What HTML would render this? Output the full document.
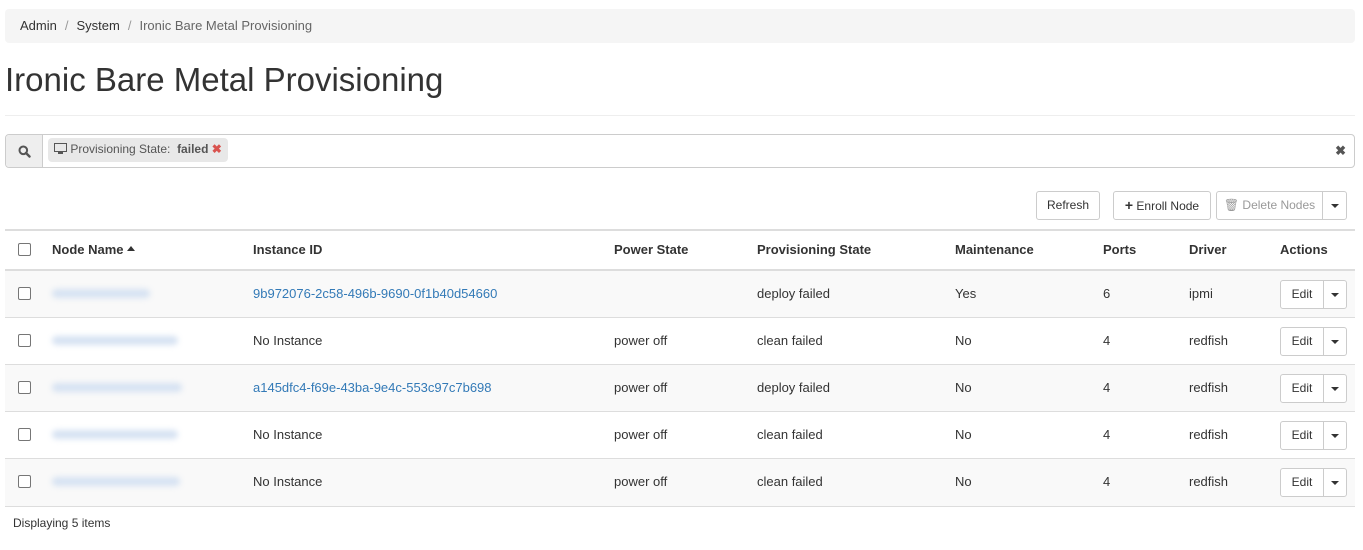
<!DOCTYPE html>
<html><head><style>
*{box-sizing:border-box;margin:0;padding:0}
body{width:1363px;height:550px;background:#fff;font-family:"Liberation Sans",Arial,sans-serif;font-size:13px;color:#333;position:relative;overflow:hidden}
.a{position:absolute}
.bc{left:5px;top:9px;width:1350px;height:34px;background:#f5f5f5;border-radius:4px;padding:9px 15px;font-size:13px}
.bc .s{color:#999;padding:0 8px}
.bc .c{color:#666}
h1{position:absolute;left:5px;top:61px;font-size:33px;font-weight:400;color:#333}
.hr{left:5px;top:115px;width:1350px;height:1px;background:#eee}
.srch{left:5px;top:134px;width:1350px;height:34px;border:1px solid #ccc;border-radius:4px;background:#fff}
.addon{left:0;top:0;width:37px;height:32px;background:#eee;border-right:1px solid #ccc;border-radius:4px 0 0 4px}
.pill{left:42px;top:3px;height:24px;background:#e8e8e8;border-radius:4px;padding:4px 6px 0 6px;font-size:12px;color:#555;white-space:nowrap}
.btn{height:29px;border:1px solid #ccc;border-radius:3px;background:#fff;font-size:12px;color:#333;text-align:center;line-height:27px}
.th{top:230px;font-weight:bold;font-size:13px;color:#333}
.cell{font-size:13px;color:#333}
a{color:#337ab7;text-decoration:none}
.cb{width:13px;height:13px;border:1px solid #767676;border-radius:2px;background:#fff}
.blur{height:9px;background:#d6e2f2;filter:blur(3px);border-radius:5px}
.car{display:inline-block;width:0;height:0;border-left:4px solid transparent;border-right:4px solid transparent;border-top:4px solid #333;vertical-align:middle}
</style></head><body>
<div class="a bc">Admin<span class="s">/</span>System<span class="s">/</span><span class="c">Ironic Bare Metal Provisioning</span></div>
<h1>Ironic Bare Metal Provisioning</h1>
<div class="a hr"></div>
<div class="a srch">
 <div class="a addon"><svg class="a" style="left:12px;top:10px" width="13" height="13" viewBox="0 0 13 13"><circle cx="5.3" cy="5.3" r="3.8" fill="none" stroke="#555" stroke-width="2"/><line x1="8" y1="8" x2="11.5" y2="11.5" stroke="#555" stroke-width="2.4" stroke-linecap="round"/></svg></div>
 <div class="a pill"><svg style="vertical-align:-2px" width="13" height="12" viewBox="0 0 13 12"><rect x="0.5" y="0.5" width="12" height="8" fill="none" stroke="#555"/><rect x="4" y="9" width="5" height="2" fill="#555"/></svg> Provisioning State:&nbsp; <b>failed</b> <span style="color:#d9534f;font-weight:bold">✖</span></div>
 <div class="a" style="right:8px;top:8px;color:#555;font-size:13px;font-weight:bold">✖</div>
</div>
<div class="a btn" style="left:1036px;top:191px;width:64px">Refresh</div>
<div class="a btn" style="left:1113px;top:191px;width:98px"><b style="font-size:14px">+</b> Enroll Node</div>
<div class="a btn" style="left:1216px;top:191px;width:107px;color:#999;border-radius:3px 0 0 3px">🗑 Delete Nodes</div>
<div class="a btn" style="left:1322px;top:191px;width:25px;border-radius:0 3px 3px 0"><span class="car"></span></div>

<div class="a" style="left:5px;top:229px;width:1350px;height:2px;background:#ddd"></div>
<div class="a" style="left:5px;top:269px;width:1350px;height:2px;background:#ddd"></div>
<div class="a cb" style="left:18px;top:243px"></div>
<div class="a th" style="left:52px;top:242px">Node Name <span class="car" style="border-top:0;border-bottom:5px solid #333;vertical-align:3px"></span></div>
<div class="a th" style="left:253px;top:242px">Instance ID</div>
<div class="a th" style="left:614px;top:242px">Power State</div>
<div class="a th" style="left:757px;top:242px">Provisioning State</div>
<div class="a th" style="left:955px;top:242px">Maintenance</div>
<div class="a th" style="left:1103px;top:242px">Ports</div>
<div class="a th" style="left:1189px;top:242px">Driver</div>
<div class="a th" style="left:1280px;top:242px">Actions</div>

<div class="a" style="left:5px;top:271px;width:1350px;height:47px;background:#f9f9f9;border-bottom:1px solid #ddd"></div>
<div class="a" style="left:5px;top:318px;width:1350px;height:47px;background:#fff;border-bottom:1px solid #ddd"></div>
<div class="a" style="left:5px;top:365px;width:1350px;height:47px;background:#f9f9f9;border-bottom:1px solid #ddd"></div>
<div class="a" style="left:5px;top:412px;width:1350px;height:47px;background:#fff;border-bottom:1px solid #ddd"></div>
<div class="a" style="left:5px;top:459px;width:1350px;height:48px;background:#f9f9f9;border-bottom:1px solid #ddd"></div>

<div class="a cb" style="left:18px;top:287px"></div><div class="a blur" style="left:52px;top:289px;width:98px"></div>
<div class="a cell" style="left:253px;top:286px"><a>9b972076-2c58-496b-9690-0f1b40d54660</a></div>
<div class="a cell" style="left:757px;top:286px">deploy failed</div><div class="a cell" style="left:955px;top:286px">Yes</div><div class="a cell" style="left:1103px;top:286px">6</div><div class="a cell" style="left:1189px;top:286px">ipmi</div>

<div class="a cb" style="left:18px;top:334px"></div><div class="a blur" style="left:52px;top:336px;width:126px"></div>
<div class="a cell" style="left:253px;top:333px">No Instance</div><div class="a cell" style="left:614px;top:333px">power off</div>
<div class="a cell" style="left:757px;top:333px">clean failed</div><div class="a cell" style="left:955px;top:333px">No</div><div class="a cell" style="left:1103px;top:333px">4</div><div class="a cell" style="left:1189px;top:333px">redfish</div>

<div class="a cb" style="left:18px;top:381px"></div><div class="a blur" style="left:52px;top:383px;width:130px"></div>
<div class="a cell" style="left:253px;top:380px"><a>a145dfc4-f69e-43ba-9e4c-553c97c7b698</a></div><div class="a cell" style="left:614px;top:380px">power off</div>
<div class="a cell" style="left:757px;top:380px">deploy failed</div><div class="a cell" style="left:955px;top:380px">No</div><div class="a cell" style="left:1103px;top:380px">4</div><div class="a cell" style="left:1189px;top:380px">redfish</div>

<div class="a cb" style="left:18px;top:428px"></div><div class="a blur" style="left:52px;top:430px;width:126px"></div>
<div class="a cell" style="left:253px;top:427px">No Instance</div><div class="a cell" style="left:614px;top:427px">power off</div>
<div class="a cell" style="left:757px;top:427px">clean failed</div><div class="a cell" style="left:955px;top:427px">No</div><div class="a cell" style="left:1103px;top:427px">4</div><div class="a cell" style="left:1189px;top:427px">redfish</div>

<div class="a cb" style="left:18px;top:475px"></div><div class="a blur" style="left:52px;top:477px;width:128px"></div>
<div class="a cell" style="left:253px;top:474px">No Instance</div><div class="a cell" style="left:614px;top:474px">power off</div>
<div class="a cell" style="left:757px;top:474px">clean failed</div><div class="a cell" style="left:955px;top:474px">No</div><div class="a cell" style="left:1103px;top:474px">4</div><div class="a cell" style="left:1189px;top:474px">redfish</div>

<div class="a btn" style="left:1280px;top:280px;width:44px;border-radius:3px 0 0 3px">Edit</div><div class="a btn" style="left:1323px;top:280px;width:24px;border-radius:0 3px 3px 0"><span class="car"></span></div>
<div class="a btn" style="left:1280px;top:327px;width:44px;border-radius:3px 0 0 3px">Edit</div><div class="a btn" style="left:1323px;top:327px;width:24px;border-radius:0 3px 3px 0"><span class="car"></span></div>
<div class="a btn" style="left:1280px;top:374px;width:44px;border-radius:3px 0 0 3px">Edit</div><div class="a btn" style="left:1323px;top:374px;width:24px;border-radius:0 3px 3px 0"><span class="car"></span></div>
<div class="a btn" style="left:1280px;top:421px;width:44px;border-radius:3px 0 0 3px">Edit</div><div class="a btn" style="left:1323px;top:421px;width:24px;border-radius:0 3px 3px 0"><span class="car"></span></div>
<div class="a btn" style="left:1280px;top:468px;width:44px;border-radius:3px 0 0 3px">Edit</div><div class="a btn" style="left:1323px;top:468px;width:24px;border-radius:0 3px 3px 0"><span class="car"></span></div>

<div class="a" style="left:13px;top:516px;font-size:12px">Displaying 5 items</div>
</body></html>
